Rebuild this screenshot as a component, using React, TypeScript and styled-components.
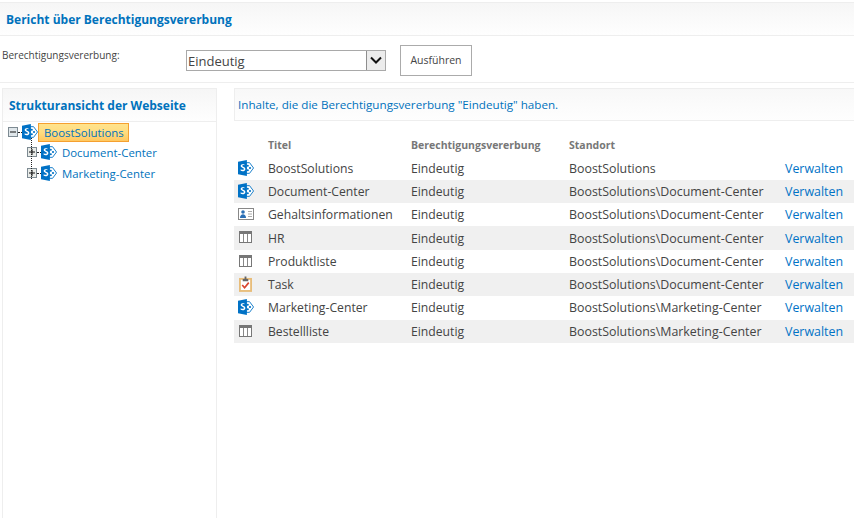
import React from 'react';
import styled, { createGlobalStyle } from 'styled-components';

const Global = createGlobalStyle`
  html, body { margin: 0; padding: 0; background: #fff; }
  body { font-family: "Open Sans", "Noto Sans", sans-serif; overflow: hidden; }
`;

const Page = styled.div`
  width: 854px;
  height: 518px;
  display: flex;
  flex-direction: column;
  padding-top: 2px;
  box-sizing: border-box;
  overflow: hidden;
`;
const TitleBar = styled.div`
  height: 32px;
  flex: none;
  display: flex;
  align-items: center;
  padding-left: 6px;
  background: linear-gradient(#f6f6f6, #fefefe);
  border-top: 1px solid #eeeeee;
  border-bottom: 1px solid #eeeeee;
  box-sizing: content-box;
`;
const Title = styled.h1`
  margin: 0;
  font-size: 12px;
  font-weight: 700;
  color: #0072bc;
`;
const FilterRow = styled.div`
  height: 46px;
  flex: none;
  display: flex;
  align-items: center;
  box-sizing: content-box;
  border-bottom: 1px solid #eeeeee;
  position: relative;
`;
const FilterLabel = styled.label`
  width: 186px;
  padding-left: 2px;
  box-sizing: border-box;
  font-size: 10px;
  color: #444;
  margin-top: -8px;
`;
const SelectBox = styled.div`
  width: 200px;
  height: 21px;
  margin-top: 2px;
  box-sizing: border-box;
  border: 1px solid #a9a9a9;
  display: flex;
  align-items: center;
  justify-content: space-between;
  font-size: 13px;
  color: #444;
  padding-left: 1px;
`;
const SelectText = styled.span`
  padding-top: 2px;
`;
const SelectArrow = styled.div`
  width: 18px;
  height: 19px;
  background: #ececec;
  border-left: 1px solid #8e8e8e;
  display: flex;
  align-items: center;
  justify-content: center;
`;
const RunButton = styled.button`
  width: 72px;
  height: 31px;
  margin-left: 14px;
  margin-top: 2px;
  background: #fff;
  border: 1px solid #ababab;
  font-family: inherit;
  font-size: 10.5px;
  color: #444;
  padding: 0;
`;
const Columns = styled.div`
  flex: 1;
  display: flex;
  padding: 5px 0 0 2px;
  gap: 17px;
  min-height: 0;
`;
const TreePanel = styled.aside`
  width: 215px;
  flex: none;
  box-sizing: border-box;
  border: 1px solid #eeeeee;
  border-bottom: none;
`;
const PanelHeader = styled.div`
  height: 32px;
  display: flex;
  align-items: center;
  padding-left: 6px;
  background: linear-gradient(#f6f6f6, #fefefe);
  border-bottom: 1px solid #eeeeee;
  font-size: 12px;
  font-weight: 700;
  color: #0072bc;
`;
const Tree = styled.div`
  position: relative;
`;
const TreeRow = styled.div<{ $indent: number; $h: number }>`
  display: flex;
  align-items: center;
  height: ${p => p.$h}px;
  padding-left: ${p => p.$indent}px;
`;
const Expander = styled.span`
  width: 10px;
  height: 10px;
  flex: none;
  display: block;
`;
const HDots = styled.span`
  width: 4px;
  border-top: 1px dotted #222;
  flex: none;
`;
const VDots = styled.span`
  position: absolute;
  left: 28px;
  top: 16px;
  height: 41px;
  border-left: 1px dotted #222;
`;
const Selected = styled.a`
  margin-left: 0;
  height: 19px;
  width: 91px;
  box-sizing: border-box;
  border: 1px solid #f5a030;
  background: linear-gradient(#ffe38c 0%, #ffdc80 50%, #ffc860 100%);
  color: #0072bc;
  font-size: 11.4px;
  display: flex;
  align-items: center;
  padding-left: 5px;
`;
const TreeLink = styled.a`
  color: #0072bc;
  font-size: 11.4px;
  margin-left: 5px;
`;
const Main = styled.main`
  flex: 1;
  min-width: 0;
`;
const InfoBar = styled.div`
  height: 33px;
  box-sizing: border-box;
  display: flex;
  align-items: center;
  padding-left: 3px;
  background: linear-gradient(#f8f8f8, #fefefe);
  border: 1px solid #eeeeee;
  border-right: none;
  font-size: 11.65px;
  color: #0072bc;
`;
const Table = styled.table`
  width: 620px;
  margin-top: 12px;
  border-collapse: collapse;
  table-layout: fixed;
`;
const Th = styled.th<{ $w: number }>`
  width: ${p => p.$w}px;
  height: 24px;
  padding: 0;
  box-sizing: border-box;
  text-align: left;
  font-size: 10.5px;
  font-weight: 700;
  color: #777;
`;
const Tr = styled.tr<{ $alt: boolean; $h: number }>`
  height: ${p => p.$h}px;
  background: ${p => (p.$alt ? '#f0f0f0' : '#fff')};
  &:nth-child(7) td {
    padding-bottom: 1px;
  }
`;
const Td = styled.td`
  padding: 0;
  font-size: 12.2px;
  color: #444;
  white-space: nowrap;
  vertical-align: middle;
`;
const LocationCell = styled(Td)`
  font-size: 12.4px;
`;
const IconCell = styled(Td)`
  padding-left: 4px;
  line-height: 0;
`;
const IconNudge = styled.div`
  margin-bottom: 2px;
`;
const ManageLink = styled.a`
  color: #0072c6;
  font-size: 12.4px;
`;

const SiteIcon = ({ size = 16 }: { size?: number }) => (
  <svg width={size} height={size} viewBox="0 0 18 18" style={{ flex: 'none', display: 'block' }}>
    <path d="M9 3h4l4.500 6-4.500 6H9z" fill="#fff" stroke="#0072c6" strokeWidth="1" />
    <circle cx="11" cy="6.500" r="1.200" fill="#0072c6" />
    <circle cx="13.500" cy="9" r="1.200" fill="#0072c6" />
    <circle cx="11" cy="11.500" r="1.200" fill="#0072c6" />
    <path d="M0 2l10-2v18L0 16z" fill="#0072c6" />
    <path d="M7.300 5.200C5.300 4.200 3 4.800 3 6.700c0 2 3.600 1.800 3.600 3.300 0 1.200-2 1.200-3.600.3v1.900c2.200.9 5.300.5 5.300-2.200 0-2.400-3.500-2.200-3.500-3.500 0-1 1.500-1 2.500-.5z" fill="#fff" />
  </svg>
);

const ListIcon = () => (
  <svg width="13" height="12" viewBox="0 0 13 12" style={{ display: 'block', marginLeft: 1 }}>
    <rect x="0.500" y="0.500" width="12" height="11" fill="#fff" stroke="#777" />
    <rect x="0" y="0" width="13" height="3" fill="#777" />
    <path d="M4.500 3v8M8.500 3v8" stroke="#888" strokeWidth="1" />
  </svg>
);

const ContactIcon = () => (
  <svg width="16" height="12" viewBox="0 0 16 12" style={{ display: 'block' }}>
    <rect x="0.500" y="0.500" width="15" height="11" fill="#fff" stroke="#888" />
    <circle cx="5" cy="4" r="1.800" fill="#2a6fb5" />
    <path d="M2 10c0-5 6-5 6 0z" fill="#2a6fb5" />
    <path d="M10 3.500h4M10 6h4M10 8.500h4" stroke="#aaa" strokeWidth="1" />
  </svg>
);

const TaskIcon = () => (
  <svg width="13" height="16" viewBox="0 0 14 17" style={{ display: 'block', marginLeft: 1 }}>
    <rect x="0" y="2" width="14" height="15" fill="#e8bd7a" />
    <rect x="2" y="4" width="10" height="11" fill="#fff" />
    <path d="M4 3h6v2.500H4zM6 0.500h2v3H6z" fill="#666" />
    <path d="M3.500 9.500l2.500 3 4.500-5.500" fill="none" stroke="#d8432c" strokeWidth="1.800" />
  </svg>
);

const Toggle = ({ open }: { open: boolean }) => (
  <Expander>
    <svg width="10" height="10" viewBox="0 0 10 10" style={{ display: 'block' }}>
      <rect x="0.500" y="0.500" width="9" height="9" fill={open ? '#dfe6ea' : '#e8ebe8'} stroke="#7d8a92" />
      <path d={open ? 'M2 5h6' : 'M2 5h6M5 2v6'} stroke="#111" strokeWidth="1" />
    </svg>
  </Expander>
);

type Kind = 'site' | 'list' | 'contact' | 'task';
const rows: { kind: Kind; title: string; loc: string; h: number }[] = [
  { kind: 'site', title: 'BoostSolutions', loc: 'BoostSolutions', h: 23 },
  { kind: 'site', title: 'Document-Center', loc: 'BoostSolutions\\Document-Center', h: 23 },
  { kind: 'contact', title: 'Gehaltsinformationen', loc: 'BoostSolutions\\Document-Center', h: 23 },
  { kind: 'list', title: 'HR', loc: 'BoostSolutions\\Document-Center', h: 24 },
  { kind: 'list', title: 'Produktliste', loc: 'BoostSolutions\\Document-Center', h: 23 },
  { kind: 'task', title: 'Task', loc: 'BoostSolutions\\Document-Center', h: 23 },
  { kind: 'site', title: 'Marketing-Center', loc: 'BoostSolutions\\Marketing-Center', h: 24 },
  { kind: 'list', title: 'Bestellliste', loc: 'BoostSolutions\\Marketing-Center', h: 23 },
];

const RowIcon = ({ kind }: { kind: Kind }) => {
  if (kind === 'site') return <SiteIcon />;
  if (kind === 'list') return <ListIcon />;
  if (kind === 'contact') return <ContactIcon />;
  return <TaskIcon />;
};

export default function App() {
  return (
    <Page>
      <Global />
      <TitleBar>
        <Title>Bericht über Berechtigungsvererbung</Title>
      </TitleBar>
      <FilterRow>
        <FilterLabel>Berechtigungsvererbung:</FilterLabel>
        <SelectBox>
          <SelectText>Eindeutig</SelectText>
          <SelectArrow>
            <svg width="12" height="8" viewBox="0 0 12 8">
              <path d="M1 1.500l5 5 5-5" fill="none" stroke="#111" strokeWidth="2" />
            </svg>
          </SelectArrow>
        </SelectBox>
        <RunButton>Ausführen</RunButton>
      </FilterRow>
      <Columns>
        <TreePanel>
          <PanelHeader>Strukturansicht der Webseite</PanelHeader>
          <Tree>
            <VDots />
            <TreeRow $indent={5} $h={20}>
              <Toggle open />
              <HDots />
              <SiteIcon />
              <Selected>BoostSolutions</Selected>
            </TreeRow>
            <TreeRow $indent={24} $h={20}>
              <Toggle open={false} />
              <HDots />
              <SiteIcon />
              <TreeLink>Document-Center</TreeLink>
            </TreeRow>
            <TreeRow $indent={24} $h={22}>
              <Toggle open={false} />
              <HDots />
              <SiteIcon />
              <TreeLink>Marketing-Center</TreeLink>
            </TreeRow>
          </Tree>
        </TreePanel>
        <Main>
          <InfoBar>Inhalte, die die Berechtigungsvererbung "Eindeutig" haben.</InfoBar>
          <Table>
            <thead>
              <tr>
                <Th $w={34} />
                <Th $w={143}>Titel</Th>
                <Th $w={158}>Berechtigungsvererbung</Th>
                <Th $w={216}>Standort</Th>
                <Th $w={69} />
              </tr>
            </thead>
            <tbody>
              {rows.map((r, i) => (
                <Tr key={r.title} $alt={i % 2 === 1} $h={r.h}>
                  <IconCell>
                    <IconNudge>
                      <RowIcon kind={r.kind} />
                    </IconNudge>
                  </IconCell>
                  <Td>{r.title}</Td>
                  <Td>Eindeutig</Td>
                  <LocationCell>{r.loc}</LocationCell>
                  <Td>
                    <ManageLink>Verwalten</ManageLink>
                  </Td>
                </Tr>
              ))}
            </tbody>
          </Table>
        </Main>
      </Columns>
    </Page>
  );
}
